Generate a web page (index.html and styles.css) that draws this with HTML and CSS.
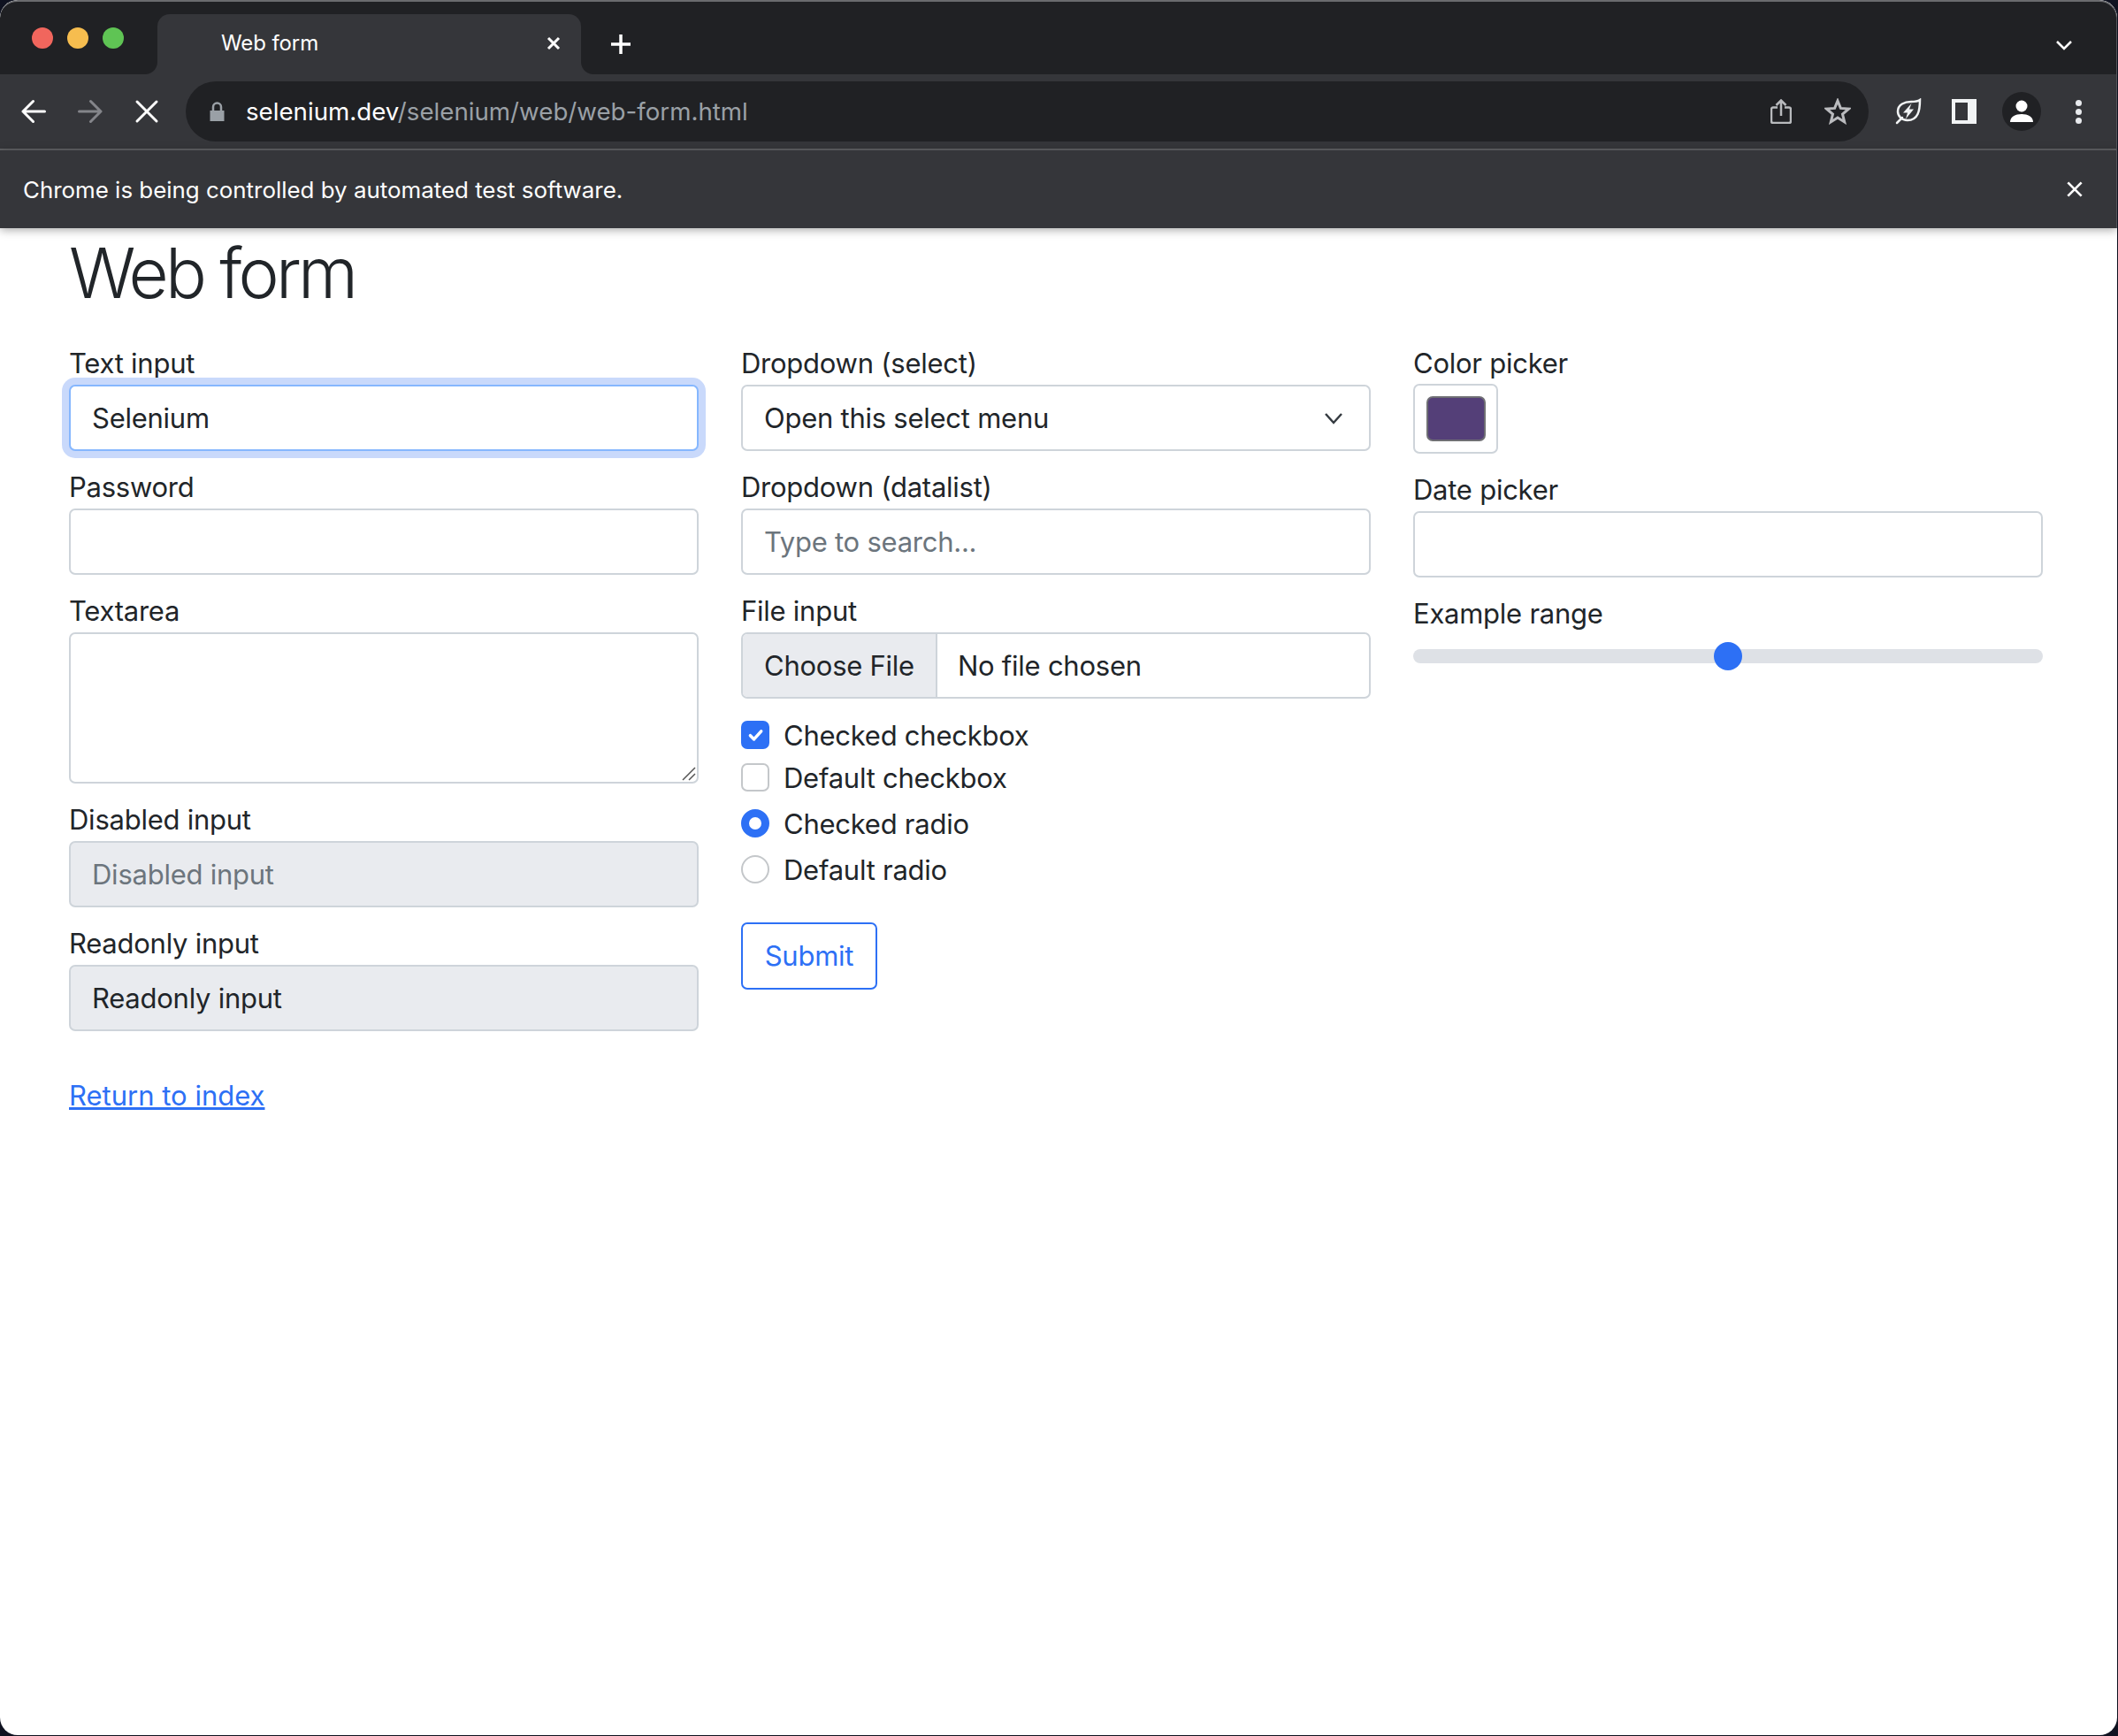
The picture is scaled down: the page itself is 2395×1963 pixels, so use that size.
FILE: index.html

```html
<!DOCTYPE html>
<html lang="en">
  <head>
    <meta charset="UTF-8" />
    <title>Web form</title>
    <link rel="stylesheet" href="styles.css">
  </head>
  <body>
    <div class="window">
      <div class="tabstrip">
        <div class="lights">
          <span class="light red"></span>
          <span class="light yellow"></span>
          <span class="light green"></span>
        </div>
        <div class="tab">
          <span class="tab-title">Web form</span>
          <svg class="tab-close" viewBox="0 0 16 16"><path d="M2 2l12 12M14 2L2 14" /></svg>
        </div>
        <svg class="new-tab" viewBox="0 0 24 24"><path d="M12 1v22M1 12h22" /></svg>
        <svg class="tab-list" viewBox="0 0 20 12"><path d="M2 2l8 8 8-8" /></svg>
      </div>

      <div class="toolbar">
        <svg class="nav-icon" viewBox="0 0 28 28"><path d="M26.5 14H2M13.5 2.500L2 14l11.500 11.500" /></svg>
        <svg class="nav-icon dim" viewBox="0 0 28 28"><path d="M1.500 14H26M14.500 2.500L26 14 14.500 25.500" /></svg>
        <svg class="nav-icon stop" viewBox="0 0 28 28"><path d="M3 3l22 22M25 3L3 25" /></svg>
        <div class="omnibox">
          <svg class="lock" viewBox="0 0 16 22"><path class="lock-body" d="M0 10h16v12H0z" /><path class="lock-loop" d="M3.500 10V6a4.500 4.500 0 0 1 9 0v4" /></svg>
          <span class="url"><span class="host">selenium.dev</span>/selenium/web/web-form.html</span>
          <svg class="share" viewBox="0 0 24 28"><path d="M8 9.500H3a2 2 0 0 0-2 2V25a2 2 0 0 0 2 2h18a2 2 0 0 0 2-2V11.500a2 2 0 0 0-2-2h-5M12 19V2M6.500 7L12 1.500 17.500 7" /></svg>
          <svg class="star" viewBox="0 0 30 30"><path d="M15 3l3.400 8.400 9.100.7-7 5.900 2.200 8.900-7.700-4.800-7.700 4.800 2.200-8.900-7-5.900 9.100-.7z" /></svg>
        </div>
        <svg class="leaf" viewBox="0 0 30 30"><path d="M28 2C28 14 26 25 14 25C7 25 3 20 3 15C3 7 11 4 18 4C22 4 26 3.500 28 2Z" /><path d="M8 22L2 28" /><path class="bolt" d="M18.500 6L9 16.500H14L12 23.500L21 12.500H16L18.500 6Z" /></svg>
        <div class="panel-icon"><span class="panel-slot"></span></div>
        <div class="avatar">
          <svg viewBox="0 0 26 26"><circle cx="13" cy="7" r="6.500" /><path d="M0 25c0-6 6-9 13-9s13 3 13 9z" /></svg>
        </div>
        <div class="kebab"><span></span><span></span><span></span></div>
      </div>

      <div class="infobar">
        <span>Chrome is being controlled by automated test software.</span>
        <svg class="info-close" viewBox="0 0 20 20"><path d="M1.500 1.500l17 17M18.500 1.500l-17 17" /></svg>
      </div>

      <main class="page">
        <h1>Web form</h1>
        <form class="form-grid">
          <div class="col">
            <div class="field">
              <label>Text input</label>
              <input class="control focused" type="text" value="Selenium" />
            </div>
            <div class="field">
              <label>Password</label>
              <input class="control" type="text" />
            </div>
            <div class="field">
              <label>Textarea</label>
              <div class="control textarea">
                <svg class="grip" viewBox="0 0 16 16"><path d="M15 1L1 15M15 8l-7 7" /></svg>
              </div>
            </div>
            <div class="field">
              <label>Disabled input</label>
              <input class="control muted" type="text" value="Disabled input" />
            </div>
            <div class="field">
              <label>Readonly input</label>
              <input class="control readonly" type="text" value="Readonly input" />
            </div>
            <a class="back-link" href="#">Return to index</a>
          </div>

          <div class="col">
            <div class="field">
              <label>Dropdown (select)</label>
              <div class="control select">
                <span>Open this select menu</span>
                <svg class="caret" viewBox="0 0 22 14"><path d="M2 2l9 10 9-10" /></svg>
              </div>
            </div>
            <div class="field">
              <label>Dropdown (datalist)</label>
              <input class="control" type="text" placeholder="Type to search..." />
            </div>
            <div class="field">
              <label>File input</label>
              <div class="control file">
                <span class="file-btn">Choose File</span>
                <span class="file-name">No file chosen</span>
              </div>
            </div>
            <div class="checks">
              <div class="check">
                <span class="box on">
                  <svg viewBox="0 0 20 20"><path d="M6 10.500l3 3 5.800-6.500" /></svg>
                </span>
                Checked checkbox
              </div>
              <div class="check check-b"><span class="box"></span>Default checkbox</div>
              <div class="check check-r"><span class="radio on"></span>Checked radio</div>
              <div class="check check-r"><span class="radio"></span>Default radio</div>
            </div>
            <button class="submit" type="button">Submit</button>
          </div>

          <div class="col">
            <div class="field">
              <label>Color picker</label>
              <div class="color-well"><span class="swatch"></span></div>
            </div>
            <div class="field">
              <label>Date picker</label>
              <input class="control" type="text" />
            </div>
            <div class="field">
              <label>Example range</label>
              <div class="range"><span class="thumb"></span></div>
            </div>
          </div>
        </form>
      </main>
    </div>
  </body>
</html>
```

FILE: styles.css

```css
* {
  box-sizing: border-box;
}
html,
body {
  margin: 0;
  padding: 0;
  height: 100%;
  background-color: #0f1220;
}
body {
  font-family: Inter, "Liberation Sans", sans-serif;
  color: #212529;
  overflow: hidden;
}
svg {
  display: block;
  flex: none;
}
.window {
  width: 2394px;
  height: 1962px;
  background-color: #fff;
  border-radius: 20px;
  overflow: hidden;
  display: flex;
  flex-direction: column;
}
.tabstrip,
.toolbar,
.infobar {
  border-right: 1px solid #55565a;
}

/* tab strip */
.tabstrip {
  height: 84px;
  background-color: #202124;
  border-top: 2px solid #6a6b6e;
  border-radius: 20px 20px 0 0;
  display: flex;
  align-items: flex-end;
}
.lights {
  width: 178px;
  height: 68px;
  display: flex;
  gap: 16px;
  padding: 15px 0 0 36px;
}
.light {
  width: 24px;
  height: 24px;
  border-radius: 50%;
}
.red {
  background-color: #f1665d;
}
.yellow {
  background-color: #f6bd4f;
}
.green {
  background-color: #5fc454;
}
.tab {
  width: 479px;
  height: 68px;
  background-color: #35363a;
  border-radius: 14px 14px 0 0;
  display: flex;
  align-items: center;
  justify-content: space-between;
  padding: 0 23px 3px 72px;
  color: #fff;
  font-size: 24px;
  letter-spacing: -0.1px;
  position: relative;
}
/* the small flares where the tab meets the toolbar */
.tab::before,
.tab::after {
  content: "";
  position: absolute;
  bottom: 0;
  width: 14px;
  height: 14px;
}
.tab::before {
  left: -14px;
  background: radial-gradient(circle at 0 0, #202124 13.5px, #35363a 14.5px);
}
.tab::after {
  right: -14px;
  background: radial-gradient(circle at 100% 0, #202124 13.5px, #35363a 14.5px);
}
.tab-close {
  width: 16px;
  height: 16px;
  fill: none;
  stroke: #fff;
  stroke-width: 3;
}
.new-tab {
  width: 24px;
  height: 24px;
  margin: 0 0 22px 33px;
  fill: none;
  stroke: #fff;
  stroke-width: 3.5;
}
.tab-list {
  width: 20px;
  height: 12px;
  margin: 0 49px 27px auto;
  fill: none;
  stroke: #fff;
  stroke-width: 2.5;
}

/* toolbar */
.toolbar {
  height: 86px;
  background-color: #35363a;
  border-bottom: 2px solid #606164;
  display: flex;
  align-items: center;
  padding-left: 24px;
}
.nav-icon {
  width: 28px;
  height: 28px;
  margin-right: 36px;
  fill: none;
  stroke: #fff;
  stroke-width: 3;
  stroke-linecap: round;
  stroke-linejoin: round;
}
.nav-icon.dim {
  stroke: #84858a;
}
.nav-icon.stop {
  margin-right: 30px;
}
.omnibox {
  width: 1903px;
  height: 68px;
  background-color: #202124;
  border-radius: 34px;
  display: flex;
  align-items: center;
  padding: 0 20px 0 27px;
}
.lock {
  width: 17px;
  height: 22px;
}
.lock-body {
  fill: #9aa0a6;
}
.lock-loop {
  fill: none;
  stroke: #9aa0a6;
  stroke-width: 2.5;
}
.url {
  margin-left: 24px;
  font-size: 27.7px;
  color: #9aa0a6;
  flex: 1;
}
.host {
  color: #fff;
}
.share {
  width: 24px;
  height: 28px;
  margin-right: 37px;
  fill: none;
  stroke: #b8babd;
  stroke-width: 2.5;
}
.star {
  width: 30px;
  height: 30px;
  fill: none;
  stroke: #babbbe;
  stroke-width: 3;
}
.leaf {
  width: 30px;
  height: 30px;
  margin-left: 30px;
  fill: none;
  stroke: #f1f3f4;
  stroke-width: 2.5;
  stroke-linecap: round;
}
.leaf .bolt {
  fill: #f1f3f4;
  stroke: none;
}
.panel-icon {
  width: 28px;
  height: 28px;
  margin-left: 34px;
  background-color: #f1f3f4;
  padding: 4px 10px 4px 4px;
}
.panel-slot {
  display: block;
  height: 100%;
  background-color: #35363a;
}
.avatar {
  width: 44px;
  height: 44px;
  margin-left: 29px;
  border-radius: 50%;
  background-color: #202124;
  display: flex;
  align-items: center;
  justify-content: center;
}
.avatar svg {
  width: 26px;
  height: 26px;
  fill: #fff;
}
.kebab {
  margin-left: 39px;
  display: flex;
  flex-direction: column;
  gap: 3px;
}
.kebab span {
  width: 7px;
  height: 7px;
  border-radius: 50%;
  background-color: #e8eaed;
}

/* automation notice */
.infobar {
  height: 88px;
  background-color: #35363a;
  color: #fff;
  font-size: 25.9px;
  display: flex;
  align-items: center;
  justify-content: space-between;
  padding: 0 38px 0 26px;
  box-shadow: 0 2px 10px rgba(0, 0, 0, 0.35);
  position: relative;
}
.info-close {
  width: 18px;
  height: 18px;
  fill: none;
  stroke: #fff;
  stroke-width: 3;
}

/* page */
.page {
  flex: 1;
  padding-left: 78px;
  font-size: 31px;
  letter-spacing: -0.25px;
}
h1 {
  margin: 0;
  height: 132px;
  padding-top: 4px;
  font-size: 78px;
  font-weight: 300;
  line-height: 94px;
  letter-spacing: -3.8px;
}
.form-grid {
  display: grid;
  grid-template-columns: repeat(3, 712px);
  column-gap: 48px;
  align-items: start;
}
.col {
  display: flex;
  flex-direction: column;
}
.field {
  display: flex;
  flex-direction: column;
  margin-bottom: 20px;
}
.field label {
  height: 45px;
  line-height: 41px;
}
.control {
  width: 100%;
  height: 75px;
  background-color: #fff;
  border: 2px solid #ced4da;
  border-radius: 7px;
  padding: 0 24px;
  font-family: inherit;
  font-size: 31px;
  letter-spacing: inherit;
  color: #212529;
  outline: none;
}
.control::placeholder {
  color: #6c757d;
}
.focused {
  border-color: #86b7fe;
  box-shadow: 0 0 0 8px #c9d9fb;
}
.textarea {
  height: 171px;
  position: relative;
}
.grip {
  position: absolute;
  right: 1px;
  bottom: 1px;
  width: 16px;
  height: 16px;
  fill: none;
  stroke: #555;
  stroke-width: 1.5;
}
.muted {
  background-color: #e9ebef;
  color: #6c757d;
}
.readonly {
  background-color: #e9ebef;
}
.back-link {
  margin-top: 29px;
  color: #2d70f5;
  line-height: 47px;
  letter-spacing: 0;
}
.select {
  display: flex;
  align-items: center;
  justify-content: space-between;
}
.caret {
  width: 22px;
  height: 14px;
  margin-right: 5px;
  fill: none;
  stroke: #343a40;
  stroke-width: 2.5;
}
.file {
  display: flex;
  align-items: center;
  padding: 0;
  overflow: hidden;
}
.file-btn {
  height: 100%;
  padding: 0 24px;
  background-color: #e9ebef;
  border-right: 2px solid #ced4da;
  display: flex;
  align-items: center;
}
.file-name {
  padding-left: 23px;
}
.checks {
  margin-top: 5px;
}
.check {
  display: flex;
  align-items: center;
  gap: 16px;
  height: 32px;
  line-height: 29px;
}
.check-b {
  margin-top: 16px;
}
.check-r {
  margin-top: 20px;
}
.box,
.radio {
  width: 32px;
  height: 32px;
  border: 2px solid #c4c7ca;
  flex: none;
}
.box {
  border-radius: 7px;
}
.radio {
  border-radius: 50%;
}
.box.on {
  background-color: #2d70f5;
  border-color: #2d70f5;
}
.box.on svg {
  width: 28px;
  height: 28px;
  fill: none;
  stroke: #fff;
  stroke-width: 2.5;
  stroke-linecap: round;
  stroke-linejoin: round;
}
.radio.on {
  background-color: #fff;
  border: 9px solid #2d70f5;
}
.submit {
  width: 154px;
  height: 76px;
  margin-top: 44px;
  background-color: #fff;
  border: 2px solid #2d70f5;
  border-radius: 7px;
  color: #2d70f5;
  font-family: inherit;
  font-size: 31px;
  letter-spacing: inherit;
  padding: 0 0 2px;
}
.color-well {
  width: 96px;
  height: 79px;
  margin-top: -1px;
  border: 2px solid #ced4da;
  border-radius: 7px;
  padding: 12px 13px;
}
.swatch {
  display: block;
  width: 67px;
  height: 51px;
  background-color: #543f78;
  border: 2px solid #6f6f74;
  border-radius: 7px;
}
.range {
  height: 16px;
  margin-top: 16px;
  background-color: #dee1e6;
  border-radius: 8px;
  position: relative;
}
.thumb {
  position: absolute;
  left: 340px;
  top: -8px;
  width: 32px;
  height: 32px;
  border-radius: 50%;
  background-color: #2d70f5;
}
```
